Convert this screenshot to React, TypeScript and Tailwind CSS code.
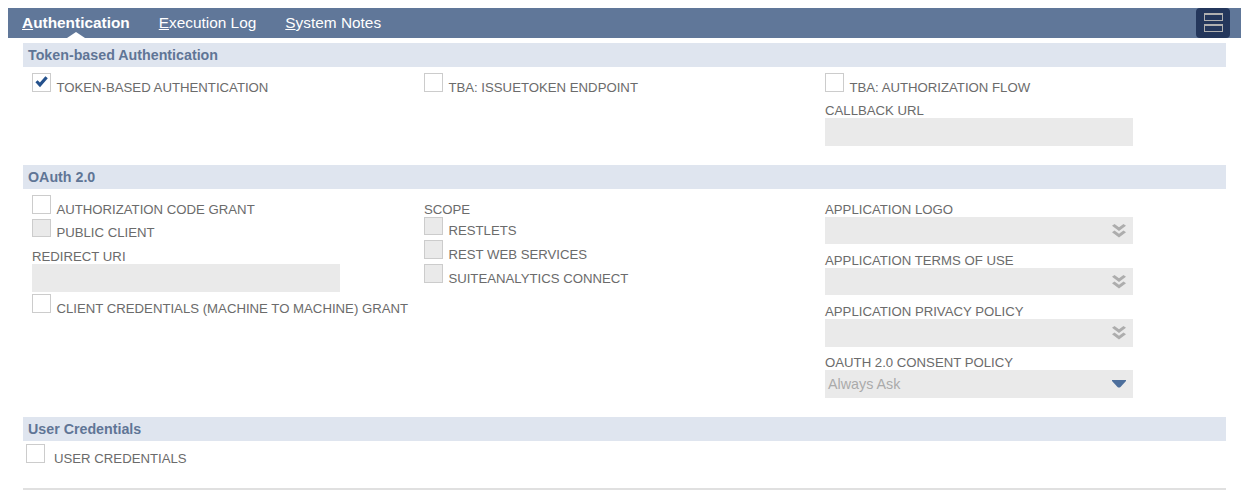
import React from "react";

function Box({ disabled, checked, short }: { disabled?: boolean; checked?: boolean; short?: boolean }) {
  return (
    <span className={`relative block w-[19px] ${short ? "h-[18px]" : "h-[19px]"} shrink-0 border border-[#cccccc] ${disabled ? "bg-[#eaeaea]" : "bg-white"}`}>
      {checked && (
        <svg viewBox="0 0 19 19" className="absolute left-[-1px] top-[-1px] w-[19px] h-[19px]">
          <path d="M3.4 9.2 L5.6 7.2 L7.9 9.4 L13.4 3.2 L15.8 5.2 L8 14.2 Z" fill="#24518c" />
        </svg>
      )}
    </span>
  );
}

function Check({ label, disabled, checked, short, className = "" }: { label: string; disabled?: boolean; checked?: boolean; short?: boolean; className?: string }) {
  return (
    <div className={`flex items-start ${className}`}>
      <Box disabled={disabled} checked={checked} short={short} />
      <span className={`ml-[5.4px] ${short ? "mt-[5px]" : "mt-[6px]"} h-4 text-[13.2px] leading-[18px] text-[#6b6b6b] whitespace-nowrap`}>{label}</span>
    </div>
  );
}

function Label({ children, className = "" }: { children: React.ReactNode; className?: string }) {
  return <div className={`h-4 text-[13.2px] leading-[18px] text-[#6b6b6b] whitespace-nowrap ${className}`}>{children}</div>;
}

function Field({ className = "", children }: { className?: string; children?: React.ReactNode }) {
  return <div className={`w-[308px] bg-[#eaeaea] flex items-center justify-between ${className}`}>{children}</div>;
}

function DoubleChevron() {
  return (
    <svg viewBox="0 0 14 14" className="w-[14px] h-[14px] mr-[7px]">
      <path d="M0 1.8 L2.5 0 L7 3.2 L11.5 0 L14 1.8 L7 7 Z" fill="#adadad" />
      <path d="M0 8.3 L2.5 6.5 L7 9.7 L11.5 6.5 L14 8.3 L7 13.5 Z" fill="#adadad" />
    </svg>
  );
}

function Section({ children }: { children: React.ReactNode }) {
  return (
    <div className="mx-[23px] w-[1203px] h-6 bg-[#dfe5ef] px-[5px] text-[14.25px] leading-6 font-bold text-[#5f7596]">{children}</div>
  );
}

export default function App() {
  return (
    <div className="w-[1247px] h-[490px] bg-white overflow-hidden pt-2 font-['Liberation_Sans',Arial,sans-serif]">
      <div className="relative mx-2 w-[1233px] h-[30px] bg-[#607799] flex items-center pl-[14px] text-[15.4px] text-white">
        <span className="font-bold mr-[29px]"><u>A</u>uthentication</span>
        <span className="mr-[29px]"><u>E</u>xecution Log</span>
        <span><u>S</u>ystem Notes</span>
        <span className="absolute left-[59px] bottom-0 w-0 h-0 border-x-[9px] border-x-transparent border-b-[6px] border-b-white" />
        <div className="absolute right-[11px] top-0 w-[34px] h-[30px] rounded-[4px] bg-[#24375c] flex flex-col items-center pt-[5px] gap-[3px]">
          <span className="block w-[19px] h-[8px] border border-[#b0b0b0] border-t-2" />
          <span className="block w-[19px] h-[8px] border border-[#b0b0b0] border-t-2" />
        </div>
      </div>

      <div className="mt-[5px]"><Section>Token-based Authentication</Section></div>
      <div className="grid grid-cols-[392px_401px_1fr] pl-[32px] pt-[6px] h-[98px]">
        <Check label="TOKEN-BASED AUTHENTICATION" checked />
        <Check label="TBA: ISSUETOKEN ENDPOINT" />
        <div>
          <Check label="TBA: AUTHORIZATION FLOW" />
          <Label className="mt-[7px]">CALLBACK URL</Label>
          <Field className="h-7" />
        </div>
      </div>

      <Section>OAuth 2.0</Section>
      <div className="grid grid-cols-[392px_401px_1fr] pl-[32px] pt-[6px] h-[228px]">
        <div>
          <Check label="AUTHORIZATION CODE GRANT" />
          <Check label="PUBLIC CLIENT" disabled short className="mt-[2px]" />
          <Label className="mt-[8px]">REDIRECT URI</Label>
          <Field className="h-7" />
          <Check label="CLIENT CREDENTIALS (MACHINE TO MACHINE) GRANT" className="mt-[2px]" />
        </div>
        <div>
          <Label className="mt-[6px]">SCOPE</Label>
          <Check label="RESTLETS" disabled short />
          <Check label="REST WEB SERVICES" disabled className="mt-[2px]" />
          <Check label="SUITEANALYTICS CONNECT" disabled className="mt-[2px]" />
        </div>
        <div>
          <Label className="mt-[6px]">APPLICATION LOGO</Label>
          <Field className="h-[27px] justify-end"><DoubleChevron /></Field>
          <Label className="mt-[8px]">APPLICATION TERMS OF USE</Label>
          <Field className="h-[27px] justify-end"><DoubleChevron /></Field>
          <Label className="mt-[8px]">APPLICATION PRIVACY POLICY</Label>
          <Field className="h-7 justify-end"><DoubleChevron /></Field>
          <Label className="mt-[7px]">OAUTH 2.0 CONSENT POLICY</Label>
          <Field className="h-7">
            <span className="ml-[3px] pt-[2px] text-[14.3px] text-[#aaaaaa]">Always Ask</span>
            <svg viewBox="0 0 14 8" className="w-[14px] h-2 mr-[7px]">
              <path d="M0 0 H14 V1 L8.5 7 Q7 8 5.5 7 L0 1 Z" fill="#4d6f9c" />
            </svg>
          </Field>
        </div>
      </div>

      <Section>User Credentials</Section>
      <div className="pl-[26px] pt-[3px] h-[47px]">
        <div className="flex items-start">
          <Box />
          <span className="ml-[9px] mt-[6px] h-4 text-[13.2px] leading-[18px] text-[#6b6b6b]">USER CREDENTIALS</span>
        </div>
      </div>
      <div className="mx-[23px] w-[1203px] h-[2px] bg-[#e0e0e0]" />
    </div>
  );
}
